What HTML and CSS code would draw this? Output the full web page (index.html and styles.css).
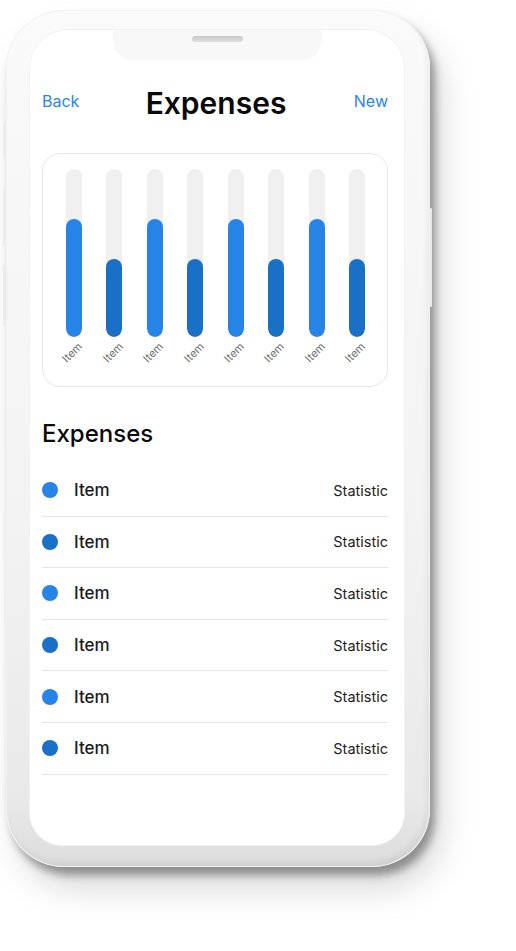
FILE: index.html
```html
<!DOCTYPE html>
<html>
<head>
<meta charset="utf-8">
<link rel="stylesheet" href="styles.css">
</head>
<body>
<div class="stage">
  <div class="phone">
    <span class="btn btn-l1"></span>
    <span class="btn btn-l2"></span>
    <span class="btn btn-l3"></span>
    <span class="btn btn-r"></span>
    <div class="screen">
      <div class="notch"><span class="speaker"></span></div>
      <header class="nav">
        <a class="nav-link">Back</a>
        <h1 class="nav-title">Expenses</h1>
        <a class="nav-link nav-right">New</a>
      </header>
      <section class="chart">
        <div class="col"><div class="track"><div class="fill light" style="height:118px"></div></div><div class="lbl"><span>Item</span></div></div>
        <div class="col"><div class="track"><div class="fill dark" style="height:78px"></div></div><div class="lbl"><span>Item</span></div></div>
        <div class="col"><div class="track"><div class="fill light" style="height:118px"></div></div><div class="lbl"><span>Item</span></div></div>
        <div class="col"><div class="track"><div class="fill dark" style="height:78px"></div></div><div class="lbl"><span>Item</span></div></div>
        <div class="col"><div class="track"><div class="fill light" style="height:118px"></div></div><div class="lbl"><span>Item</span></div></div>
        <div class="col"><div class="track"><div class="fill dark" style="height:78px"></div></div><div class="lbl"><span>Item</span></div></div>
        <div class="col"><div class="track"><div class="fill light" style="height:118px"></div></div><div class="lbl"><span>Item</span></div></div>
        <div class="col"><div class="track"><div class="fill dark" style="height:78px"></div></div><div class="lbl"><span>Item</span></div></div>
      </section>
      <h2 class="section-title">Expenses</h2>
      <ul class="list">
        <li class="row"><span class="dot light"></span><span class="row-name">Item</span><span class="row-stat">Statistic</span></li>
        <li class="row"><span class="dot dark"></span><span class="row-name">Item</span><span class="row-stat">Statistic</span></li>
        <li class="row"><span class="dot light"></span><span class="row-name">Item</span><span class="row-stat">Statistic</span></li>
        <li class="row"><span class="dot dark"></span><span class="row-name">Item</span><span class="row-stat">Statistic</span></li>
        <li class="row"><span class="dot light"></span><span class="row-name">Item</span><span class="row-stat">Statistic</span></li>
        <li class="row"><span class="dot dark"></span><span class="row-name">Item</span><span class="row-stat">Statistic</span></li>
      </ul>
    </div>
  </div>
</div>
</body>
</html>
```
FILE: styles.css
```css
* { box-sizing: border-box; }
html, body {
  margin: 0;
  padding: 0;
  background: #ffffff;
  font-family: Inter, "Noto Sans", "Liberation Sans", sans-serif;
  -webkit-font-smoothing: antialiased;
}
.stage {
  width: 516px;
  height: 951px;
  padding: 10px 0 0 6px;
  overflow: hidden;
}
.phone {
  position: relative;
  width: 424px;
  height: 857px;
  border-radius: 58px;
  padding: 20px 26px 22px 24px;
  background: linear-gradient(180deg, #fafafa 0%, #f3f3f3 60%, #e9e9e9 92%, #dcdcdc 100%);
  box-shadow:
    inset 0 0 0 1px #f2f2f2,
    inset -3px -5px 6px rgba(0,0,0,0.06),
    5px 8px 8px rgba(0,0,0,0.36),
    12px 22px 34px rgba(0,0,0,0.15);
}
.btn {
  position: absolute;
  width: 3px;
  background: #ececec;
  border-radius: 2px;
}
.btn-l1 { left: -3px; top: 113px; height: 34px; }
.btn-l2 { left: -3px; top: 178px; height: 58px; }
.btn-l3 { left: -3px; top: 255px; height: 60px; }
.btn-r { right: -2px; top: 198px; height: 99px; width: 2px; background: #e9e9e9; }
.screen {
  position: relative;
  width: 374px;
  height: 815px;
  background: #ffffff;
  border-radius: 38px 38px 32px 32px;
  box-shadow: 0 0 0 1px #f2f2f2;
  overflow: hidden;
}
.notch {
  position: absolute;
  left: 83px;
  top: 0;
  width: 209px;
  height: 30px;
  background: #f8f8f8;
  border-radius: 0 0 20px 20px;
  display: flex;
  justify-content: center;
  padding-top: 6px;
}
.speaker {
  width: 51px;
  height: 6px;
  border-radius: 3px;
  background: linear-gradient(180deg, #c9c9c9, #dedede);
}
.nav {
  display: grid;
  grid-template-columns: 1fr auto 1fr;
  align-items: center;
  height: 40px;
  margin-top: 51px;
  padding: 0 16px 0 12px;
}
.nav-link {
  font-size: 16px;
  color: #2a85e8;
  line-height: 20px;
}
.nav-right { justify-self: end; }
.nav-title {
  margin: 0;
  font-size: 30px;
  font-weight: 600;
  color: #0a0a0a;
  letter-spacing: 0;
  line-height: 36px;
  transform: translate(1px, 2px);
}
.chart {
  margin: 32px 16px 0 12px;
  height: 234px;
  border: 1px solid #e6e6e6;
  border-radius: 18px;
  padding: 15px 22px 0 23px;
  display: flex;
  justify-content: space-between;
}
.col {
  width: 16px;
  display: flex;
  flex-direction: column;
  align-items: center;
}
.track {
  width: 16px;
  height: 168px;
  border-radius: 8px;
  background: #f0f0f0;
  display: flex;
  flex-direction: column;
  justify-content: flex-end;
  overflow: hidden;
}
.fill { width: 16px; border-radius: 8px; }
.light { background: #2584e6; }
.dark { background: #1a6fc7; }
.lbl {
  width: 14px;
  display: flex;
  justify-content: flex-end;
  margin-top: 1px;
  height: 14px;
}
.lbl span {
  flex: none;
  white-space: nowrap;
  font-size: 11px;
  line-height: 13px;
  color: #6e6e6e;
  transform-origin: right center;
  transform: rotate(-45deg);
}
.section-title {
  margin: 32px 16px 0 12px;
  font-size: 24px;
  font-weight: 500;
  line-height: 29px;
  color: #0a0a0a;
}
.list {
  list-style: none;
  margin: 17px 16px 0 12px;
  padding: 0;
}
.row {
  display: flex;
  align-items: center;
  height: 51.6px;
  border-bottom: 1px solid #e5e5e5;
}
.dot {
  width: 16px;
  height: 16px;
  border-radius: 50%;
  flex: none;
  margin-right: 16px;
}
.row-name {
  font-size: 17px;
  font-weight: 500;
  color: #1c1c1c;
  flex: 1;
}
.row-stat {
  font-size: 14.5px;
  color: #222222;
}
```
